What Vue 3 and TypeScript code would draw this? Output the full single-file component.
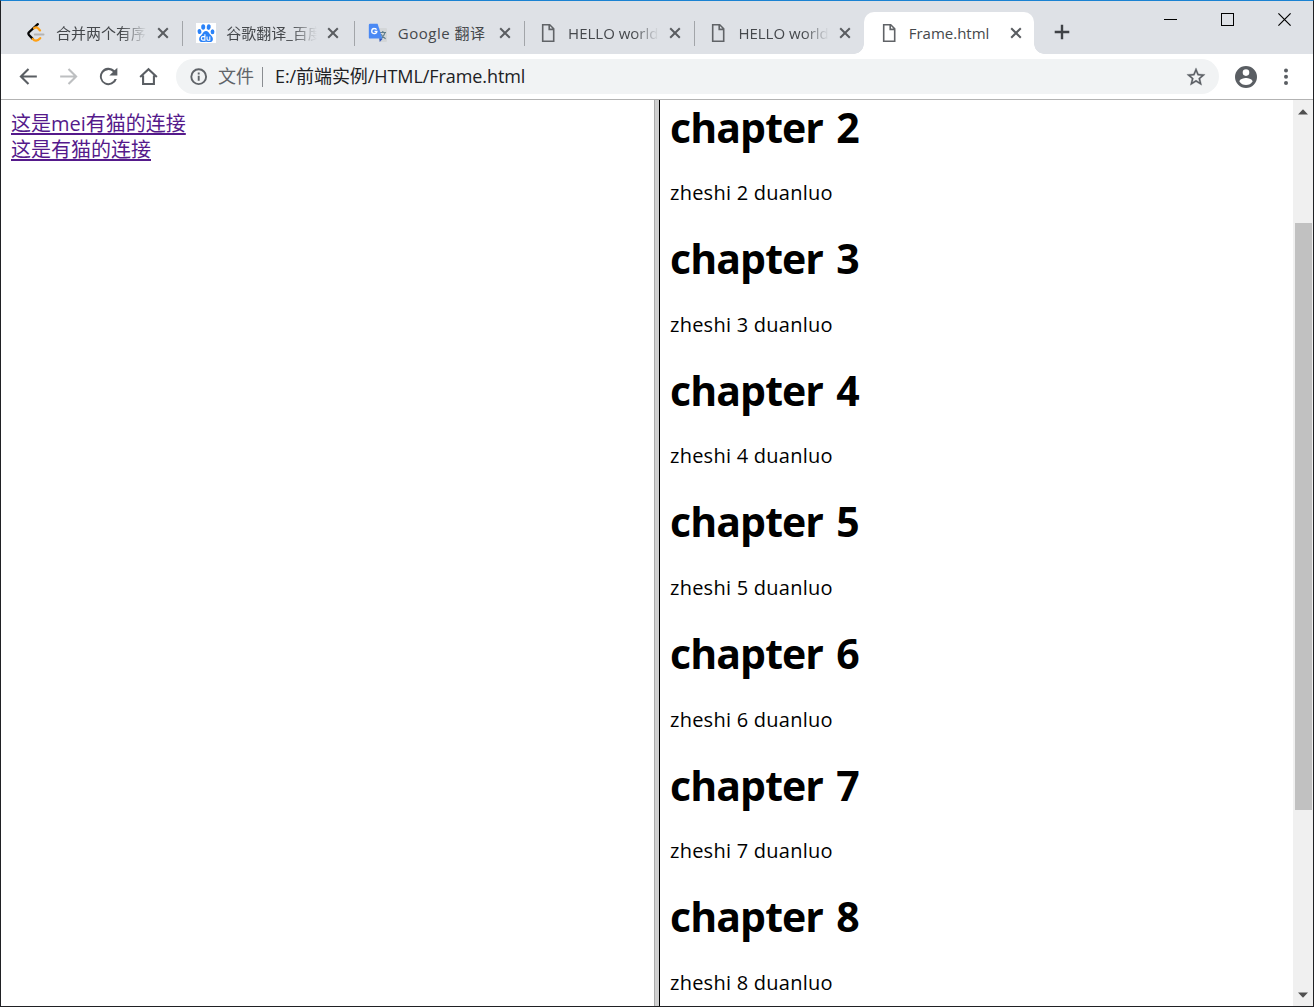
<script setup lang="ts">
interface Tab {
  title: string
  icon: 'leetcode' | 'baidu' | 'translate' | 'file'
  active?: boolean
}

const tabs: Tab[] = [
  { title: '合并两个有序', icon: 'leetcode' },
  { title: '谷歌翻译_百度', icon: 'baidu' },
  { title: 'Google 翻译', icon: 'translate' },
  { title: 'HELLO world', icon: 'file' },
  { title: 'HELLO world', icon: 'file' },
  { title: 'Frame.html', icon: 'file', active: true },
]

const chapters: number[] = [2, 3, 4, 5, 6, 7, 8]
</script>

<template>
  <div class="window">
    <header class="strip">
      <div class="tabs">
        <div v-for="(tab, i) in tabs" :key="i" class="tab" :class="{ active: tab.active, last: i === 4 }">
          <svg v-if="tab.icon === 'leetcode'" class="icon" viewBox="0 0 20 20" fill="none">
            <path d="M11.8 1.2 3 9.2Q1.800 10.600 3 12L6.700 15.900" stroke="#050505" stroke-width="2.300" stroke-linecap="round" />
            <path d="M8.100 5.200Q10.200 3.500 12.300 5.500L14 7.400M6.700 15.900Q9.800 19.800 14.200 15.200" stroke="#ffa116" stroke-width="2.300" stroke-linecap="round" />
            <path d="M8.800 11.500H17.500" stroke="#b3b3b3" stroke-width="2" stroke-linecap="round" />
          </svg>
          <svg v-else-if="tab.icon === 'baidu'" class="icon" viewBox="0 0 20 20">
            <rect width="20" height="20" fill="#fff" />
            <g fill="#2a82f8">
              <ellipse cx="7.200" cy="4" rx="2" ry="2.800" />
              <ellipse cx="12.700" cy="4.100" rx="2" ry="2.800" transform="rotate(10 12.7 4.1)" />
              <ellipse cx="3.500" cy="8.500" rx="1.900" ry="2.600" transform="rotate(-12 3.5 8.5)" />
              <ellipse cx="16.500" cy="8.700" rx="1.900" ry="2.500" />
              <path d="M10 8.100c2 0 2.700 1.500 3.700 2.800 1.400 1.600 3.200 2.600 3.200 5 0 2.200-1.500 3.200-3.200 3.200-1.400 0-2.300-.4-3.700-.4s-2.300.4-3.700.4c-1.800 0-3.200-1.100-3.200-3.200 0-2.300 1.900-3.400 3.200-5C7.300 9.600 8 8.100 10 8.100z" />
            </g>
            <path d="M8.900 11.200v5.900H6.800c-2 0-2-3.500 0-3.500h2M11 13.400v2.500c0 1.200.6 1.300 1.200 1.300h1.600v-3.800" fill="none" stroke="#fff" stroke-width="1.100" />
          </svg>
          <svg v-else-if="tab.icon === 'translate'" class="icon" viewBox="0 0 20 20">
            <path d="M8 5h10q1 0 1 1v12q0 1-1 1h-6z" fill="#d3d6d8" />
            <path d="M11.700 9.500H18M14.800 8v1.500M17 9.700q-1 4-4.300 6M13 11.200q1.700 2.800 4.600 4.600" fill="none" stroke="#607d8b" stroke-width="1.200" />
            <path d="m11.200 15.200 3.500.5-3 3.200z" fill="#3054b8" />
            <path d="M2 .8h7.600l4.800 14.800H2q-1.200 0-1.200-1.200V2Q.8.8 2 .8z" fill="#4a89f4" />
            <path d="M8.600 6.600Q7.700 5.500 6.400 5.500a2.600 2.600 0 1 0 2.500 3H6.500" fill="none" stroke="#fff" stroke-width="1.300" />
          </svg>
          <svg v-else class="icon" viewBox="0 0 20 20" fill="none" stroke="#606367" stroke-width="1.600">
            <path d="M4.700 1.800h7l4 4v12.400h-11zM11.200 1.800v4.600h4.500" />
          </svg>
          <span class="title">{{ tab.title }}</span>
          <svg class="close" viewBox="0 0 12 12"><path d="m1.200 1.200 9.600 9.600m0-9.600-9.600 9.600" stroke="#5a5d61" stroke-width="2" /></svg>
        </div>
      </div>
      <svg class="plus" viewBox="0 0 16 16"><path d="M8 .7v14.600M.7 8h14.600" stroke="#3f4246" stroke-width="2.400" /></svg>
      <div class="controls">
        <svg viewBox="0 0 14 14" shape-rendering="crispEdges"><path d="M0 7.500h13" stroke="#000" /></svg>
        <svg viewBox="0 0 14 14" shape-rendering="crispEdges"><path d="M.5 1.500h12v12H.5z" stroke="#000" fill="none" /></svg>
        <svg viewBox="0 0 14 14"><path d="m.4 1.400 12.200 12.200m0-12.200L.4 13.600" stroke="#000" stroke-width="1.200" /></svg>
      </div>
    </header>

    <nav class="toolbar">
      <svg class="nav" viewBox="0 0 24 24" fill="none" stroke="#5a5e63" stroke-width="2"><path d="M20 12H5M12 4.700 4.700 12l7.300 7.300" /></svg>
      <svg class="nav" viewBox="0 0 24 24" fill="none" stroke="#bdbfc1" stroke-width="2"><path d="M4 12h15M12 4.700l7.300 7.300-7.300 7.300" /></svg>
      <svg class="nav" viewBox="0 0 24 24"><path fill="#5a5e63" d="M17.900 6.100A8.300 8.300 0 1 0 20 14.300h-2.200A6.300 6.300 0 1 1 16.300 7.700L12.800 11h7.700V3.500z" /></svg>
      <svg class="nav" viewBox="0 0 24 24" fill="none" stroke="#5a5e63" stroke-width="2"><path d="M4 12.500 12 5l8 7.500M6.800 11v8.200h10.400V11" /></svg>
      <div class="omnibox">
        <svg class="info" viewBox="0 0 18 18" fill="none" stroke="#5f6368" stroke-width="1.900"><circle cx="8.700" cy="8.700" r="7.400" /><path d="M8.700 7.700v5M8.700 4.500v1.900" /></svg>
        <span class="scheme">文件</span>
        <i class="bar"></i>
        <span class="url">E:/前端实例/HTML/Frame.html</span>
        <svg class="star" viewBox="0 0 24 24"><path fill="#5a5e63" d="m22 9.240-7.190-.62L12 2 9.190 8.630 2 9.240l5.460 4.730L5.820 21 12 17.270 18.180 21l-1.630-7.030zM12 15.400l-3.760 2.270 1-4.280-3.320-2.880 4.380-.38L12 6.100l1.710 4.040 4.380.38-3.320 2.880 1 4.280z" stroke="#5a5e63" stroke-width=".3" /></svg>
      </div>
      <svg class="avatar" viewBox="2 2 20 20"><path fill="#5a5e63" d="M12 2a10 10 0 1 0 0 20 10 10 0 0 0 0-20zm0 3a3 3 0 1 1 0 6 3 3 0 0 1 0-6zm0 14.200A7.200 7.200 0 0 1 6 16c0-2 4-3.100 6-3.100s6 1.100 6 3.100a7.200 7.200 0 0 1-6 3.200z" /></svg>
      <svg class="more" viewBox="0 0 6 18" fill="#5a5e63"><circle cx="3" cy="2.500" r="2" /><circle cx="3" cy="8.700" r="2" /><circle cx="3" cy="15" r="2" /></svg>
    </nav>

    <main class="frames">
      <section class="left">
        <a href="#mei">这是mei有猫的连接</a>
        <a href="#mao">这是有猫的连接</a>
      </section>
      <div class="divider"></div>
      <section class="right">
        <article v-for="n in chapters" :key="n">
          <h1>chapter {{ n }}</h1>
          <p>zheshi {{ n }} duanluo</p>
        </article>
      </section>
      <aside class="scrollbar">
        <svg viewBox="0 0 10 6"><path d="M5 .3 10 5.500H0z" fill="#505050" /></svg>
        <div class="thumb"></div>
        <svg class="down" viewBox="0 0 10 6"><path d="M5 5.700 10 .5H0z" fill="#505050" /></svg>
      </aside>
    </main>
  </div>
</template>

<style>
body {
  margin: 0;
  overflow: hidden;
}
</style>

<style scoped>
.window {
  box-sizing: border-box;
  width: 1314px;
  height: 1007px;
  display: flex;
  flex-direction: column;
  border: 1px solid #202124;
  border-top-color: #1a82d2;
  background: #fff;
  overflow: hidden;
  font-family: "Open Sans", "Noto Sans CJK SC", sans-serif;
}
svg {
  display: block;
  flex: none;
}
.strip {
  height: 53px;
  flex: none;
  display: flex;
  background: #dee1e6;
}
.tabs {
  display: flex;
  padding: 11px 0 0 10.5px;
}
.tab {
  box-sizing: border-box;
  position: relative;
  width: 170.3px;
  height: 42px;
  display: flex;
  align-items: center;
  padding-left: 14.5px;
}
.tab:nth-child(2) {
  width: 171.5px;
}
.tab::after {
  content: "";
  position: absolute;
  right: -1.5px;
  top: 9px;
  width: 1px;
  height: 25px;
  background: #a2a5a9;
}
.tab.active::after,
.tab.last::after {
  display: none;
}
.tab.active {
  background: #fff;
  border-radius: 10px 10px 0 0;
}
.tab.active::before {
  content: "";
  position: absolute;
  left: -10px;
  right: -10px;
  bottom: 0;
  height: 10px;
  background:
    radial-gradient(circle at 0 0, transparent 9.5px, #fff 10px) left / 10px 10px no-repeat,
    radial-gradient(circle at 100% 0, transparent 9.5px, #fff 10px) right / 10px 10px no-repeat;
}
.icon {
  width: 20px;
  height: 20px;
}
.title {
  width: 91px;
  margin-left: 10px;
  font-size: 15px;
  line-height: 24px;
  color: #45484c;
  white-space: nowrap;
  overflow: hidden;
  -webkit-mask-image: linear-gradient(90deg, #000 72%, transparent 100%);
  mask-image: linear-gradient(90deg, #000 72%, transparent 100%);
}
.tab:nth-child(3) .title,
.tab.active .title {
  -webkit-mask-image: none;
  mask-image: none;
}
.tab:nth-child(3) .title {
  letter-spacing: 0.5px;
}
.close {
  width: 12px;
  height: 12px;
  margin-left: 10px;
}
.plus {
  width: 16px;
  height: 16px;
  margin: 23px 0 0 20px;
}
.controls {
  display: flex;
  gap: 43px;
  margin: 11px 21px 0 auto;
}
.controls svg {
  width: 14px;
  height: 14px;
}
.toolbar {
  height: 45px;
  flex: none;
  display: flex;
  align-items: center;
  padding-left: 15px;
  border-bottom: 1px solid #b3b3b3;
}
.nav {
  width: 25px;
  height: 25px;
  margin-right: 15px;
}
.omnibox {
  box-sizing: border-box;
  width: 1043px;
  height: 35px;
  display: flex;
  align-items: center;
  padding: 0 12px 0 14px;
  border-radius: 18px;
  background: #f1f3f4;
}
.info {
  width: 18px;
  height: 18px;
}
.scheme,
.url {
  padding-bottom: 2px;
  font-size: 18px;
  line-height: 26px;
  white-space: nowrap;
  color: #606469;
}
.scheme {
  margin-left: 10px;
}
.bar {
  width: 1px;
  height: 20px;
  margin: 0 12px 0 8px;
  background: #8a8d91;
}
.url {
  color: #202124;
  letter-spacing: -0.08px;
}
.star {
  width: 22px;
  height: 22px;
  margin-left: auto;
}
.avatar {
  width: 22px;
  height: 22px;
  margin-left: 16px;
}
.more {
  width: 6px;
  height: 18px;
  margin-left: 26px;
}
.frames {
  flex: 1;
  min-height: 0;
  display: flex;
}
.left {
  width: 653px;
  flex: none;
  box-sizing: border-box;
  padding: 11px 10px;
}
.left a {
  display: block;
  width: max-content;
  height: 26px;
  font-size: 20px;
  line-height: 26px;
  color: #551a8b;
  text-decoration: underline;
  text-decoration-thickness: 2px;
  text-underline-offset: 2px;
  text-decoration-skip-ink: none;
}
.divider {
  box-sizing: border-box;
  width: 6px;
  flex: none;
  border-left: 1px solid #aaa;
  border-right: 1px solid #000;
  background: #d0d0d0;
}
.right {
  flex: 1;
  min-width: 0;
  overflow: hidden;
  padding-left: 10px;
}
article {
  height: 131.6px;
  display: flow-root;
}
h1 {
  margin: 0.4px 0 22.6px;
  font-size: 41px;
  line-height: 56px;
  font-weight: 700;
  letter-spacing: -0.9px;
  word-spacing: 3.4px;
  color: #000;
}
article h1 {
  margin-top: -1.4px;
  margin-bottom: 24.6px;
}
p {
  margin: 0;
  font-size: 20px;
  line-height: 28px;
  letter-spacing: 0.25px;
  color: #000;
}
.scrollbar {
  box-sizing: border-box;
  width: 20px;
  flex: none;
  display: flex;
  flex-direction: column;
  align-items: center;
  padding: 9px 0 8px;
  background: #f0f0f0;
}
.scrollbar svg {
  width: 10px;
  height: 6px;
}
.thumb {
  width: 17px;
  height: 587px;
  margin-top: 108px;
  margin-left: 1px;
  background: #c1c1c1;
}
.scrollbar .down {
  margin-top: auto;
}
</style>
